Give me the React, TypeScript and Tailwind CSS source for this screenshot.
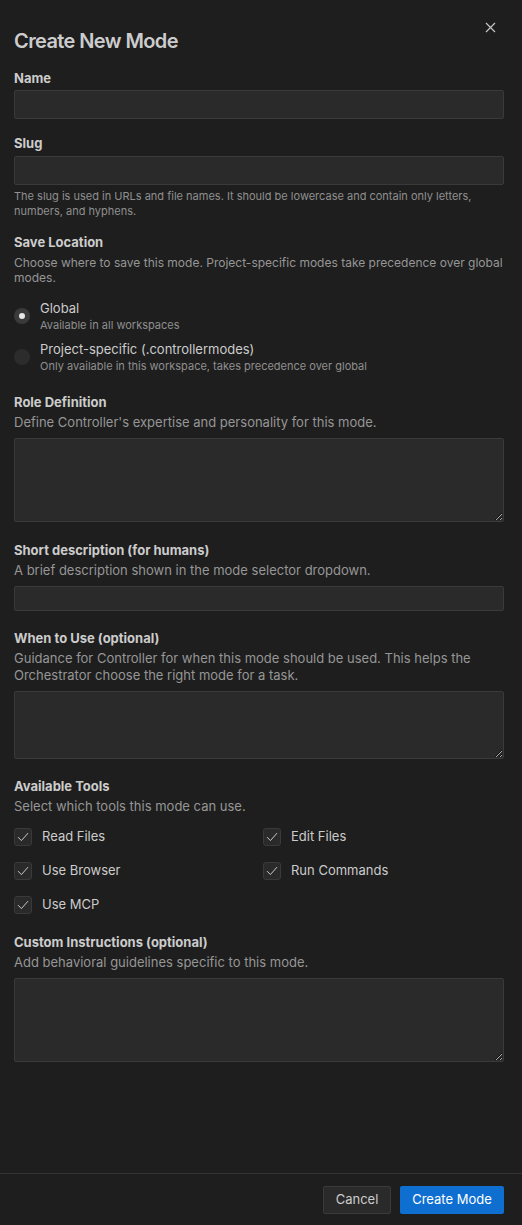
import React, { useState } from 'react';

const font = { fontFamily: 'Inter, "Noto Sans", sans-serif' };

function Label({ children }: { children: React.ReactNode }) {
  return <div className="text-[13px] leading-[18px] font-bold text-[#cccccc]">{children}</div>;
}

function Desc({ children }: { children: React.ReactNode }) {
  return <div className="text-[13px] leading-[17px] text-[#969696] mt-[3px] mb-[7px]">{children}</div>;
}

function TextInput({ h }: { h: string }) {
  return (
    <input
      type="text"
      className={`block w-full ${h} bg-[#2a2a2a] border border-[#3a3a3a] rounded-[2px] outline-none text-[13px] text-[#cccccc] px-2`}
    />
  );
}

function TextArea({ h }: { h: string }) {
  return (
    <textarea
      className={`block w-full ${h} bg-[#2a2a2a] border border-[#3a3a3a] rounded-[2px] outline-none text-[13px] text-[#cccccc] p-2 resize-y [color-scheme:dark]`}
    />
  );
}

function Check({ label }: { label: string }) {
  return (
    <div className="flex items-center h-[18px]">
      <div className="w-[18px] h-[18px] rounded-[3px] bg-[#2a2a2a] border border-[#3a3a3a] flex items-center justify-center">
        <svg width="14" height="14" viewBox="0 0 14 14" fill="none">
          <path d="M2.3 7.4 L5.4 10.6 L11.8 3.4" stroke="#c8c8c8" strokeWidth="1" strokeLinecap="round" strokeLinejoin="round" />
        </svg>
      </div>
      <span className="ml-[10px] text-[13px] text-[#cccccc]">{label}</span>
    </div>
  );
}

function Radio({ checked, title, sub, onClick }: { checked: boolean; title: string; sub: string; onClick: () => void }) {
  return (
    <div className="flex items-center cursor-pointer" onClick={onClick}>
      <div className={`w-[16px] h-[16px] rounded-full flex items-center justify-center ${checked ? 'bg-[#3a3a3a]' : 'bg-[#2c2c2c]'}`}>
        {checked && <div className="w-[6px] h-[6px] rounded-full bg-[#e6e6e6]" />}
      </div>
      <div className="ml-[10px]">
        <div className="text-[13px] leading-[18px] text-[#cccccc]">{title}</div>
        <div className="text-[11px] leading-[15px] text-[#8f8f8f] mt-[1px]">{sub}</div>
      </div>
    </div>
  );
}

export default function App() {
  const [loc, setLoc] = useState<'global' | 'project'>('global');

  return (
    <div className="w-[522px] h-[1225px] bg-[#1e1e1e] flex flex-col" style={font}>
      <div className="flex-1 pl-[14px] pr-[18px] relative">
        <button className="absolute right-[26px] top-[21px] w-[12px] h-[12px] flex items-center justify-center">
          <svg width="11" height="11" viewBox="0 0 11 11">
            <path d="M1 1 L10 10 M10 1 L1 10" stroke="#c5c5c5" strokeWidth="1.2" />
          </svg>
        </button>

        <h1 className="pt-[27px] text-[20px] leading-[28px] font-semibold tracking-[-0.6px] text-[#cccccc]">Create New Mode</h1>

        <div className="mt-[14px]">
          <div className="mb-[3px]"><Label>Name</Label></div>
          <TextInput h="h-[29px]" />
        </div>

        <div className="mt-[15px]">
          <div className="mb-[4px]"><Label>Slug</Label></div>
          <TextInput h="h-[29px]" />
          <div className="mt-[4px] text-[11px] leading-[15px] text-[#8f8f8f]">
            The slug is used in URLs and file names. It should be lowercase and contain only letters, numbers, and hyphens.
          </div>
        </div>

        <div className="mt-[14px]">
          <Label>Save Location</Label>
          <div className="mt-[4px] text-[12px] leading-[15px] text-[#969696]">
            Choose where to save this mode. Project-specific modes take precedence over global modes.
          </div>
          <div className="mt-[14px] flex flex-col gap-[7px]">
            <Radio checked={loc === 'global'} title="Global" sub="Available in all workspaces" onClick={() => setLoc('global')} />
            <Radio
              checked={loc === 'project'}
              title="Project-specific (.controllermodes)"
              sub="Only available in this workspace, takes precedence over global"
              onClick={() => setLoc('project')}
            />
          </div>
        </div>

        <div className="mt-[19px]">
          <Label>Role Definition</Label>
          <Desc>Define Controller's expertise and personality for this mode.</Desc>
          <TextArea h="h-[84px]" />
        </div>

        <div className="mt-[19px]">
          <Label>Short description (for humans)</Label>
          <Desc>A brief description shown in the mode selector dropdown.</Desc>
          <TextInput h="h-[25px]" />
        </div>

        <div className="mt-[18px]">
          <Label>When to Use (optional)</Label>
          <Desc>Guidance for Controller for when this mode should be used. This helps the Orchestrator choose the right mode for a task.</Desc>
          <TextArea h="h-[68px]" />
        </div>

        <div className="mt-[18px]">
          <Label>Available Tools</Label>
          <Desc>Select which tools this mode can use.</Desc>
          <div className="grid grid-cols-2 gap-x-[8px] gap-y-[16px] mt-[13px]">
            <Check label="Read Files" />
            <Check label="Edit Files" />
            <Check label="Use Browser" />
            <Check label="Run Commands" />
            <Check label="Use MCP" />
          </div>
        </div>

        <div className="mt-[19px]">
          <Label>Custom Instructions (optional)</Label>
          <Desc>Add behavioral guidelines specific to this mode.</Desc>
          <TextArea h="h-[84px]" />
        </div>
      </div>

      <div className="h-[52px] border-t border-[#333333] flex items-center justify-end gap-[9px] pr-[18px]">
        <button className="h-[28px] w-[68px] rounded-[2px] bg-[#2a2a2a] border border-[#3a3a3a] text-[13px] text-[#cccccc]">
          Cancel
        </button>
        <button className="h-[28px] w-[104px] rounded-[2px] bg-[#0e6fd1] text-[13px] text-white">
          Create Mode
        </button>
      </div>
    </div>
  );
}
